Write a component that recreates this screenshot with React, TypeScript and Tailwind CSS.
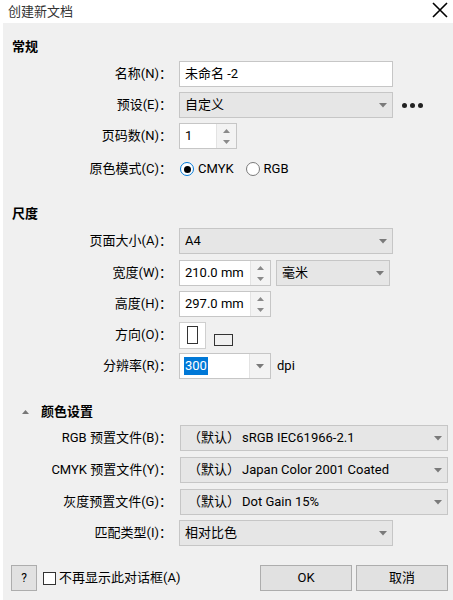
import React from "react";

const Caret = () => (
  <svg width="8" height="5" viewBox="0 0 8 5" className="shrink-0">
    <path d="M0 0H8L4 4.5Z" fill="#7a7a7a" />
  </svg>
);

const SpinArrows = () => (
  <div className="flex w-[20px] shrink-0 flex-col items-center justify-center gap-[7px] border-l border-[#e3e3e3] bg-[#f3f3f3]">
    <svg width="7" height="4" viewBox="0 0 7 4">
      <path d="M0 4H7L3.5 0Z" fill="#8a8a8a" />
    </svg>
    <svg width="7" height="4" viewBox="0 0 7 4">
      <path d="M0 0H7L3.5 4Z" fill="#8a8a8a" />
    </svg>
  </div>
);

function Select({ value, className }: { value: React.ReactNode; className: string }) {
  return (
    <div
      className={`flex h-[26px] items-center border border-[#c6c6c6] bg-[#e6e6e6] pl-[5px] pr-[5px] ${className}`}
    >
      <span className="flex-1 truncate">{value}</span>
      <Caret />
    </div>
  );
}

function Row({
  label,
  children,
  className = "",
}: {
  label: string;
  children: React.ReactNode;
  className?: string;
}) {
  return (
    <div className={`flex h-[26px] items-center ${className}`}>
      <div className="w-[169px] shrink-0 whitespace-nowrap text-right">{label}</div>
      <div className="ml-[7px] flex items-center">{children}</div>
    </div>
  );
}

function Radio({ checked, label }: { checked: boolean; label: string }) {
  return (
    <div className="flex items-center gap-[4px]">
      {checked ? (
        <span className="flex h-[14px] w-[14px] items-center justify-center rounded-full border border-[#0078d7] bg-white">
          <span className="h-[7px] w-[7px] rounded-full bg-black" />
        </span>
      ) : (
        <span className="h-[14px] w-[14px] rounded-full border border-[#7a7a7a] bg-white" />
      )}
      <span>{label}</span>
    </div>
  );
}

export default function App() {
  return (
    <div className="h-[600px] w-[453px] overflow-hidden bg-white font-['Roboto','Noto_Sans_CJK_SC',sans-serif] text-[13px] leading-[18px] text-black">
      {/* Title bar */}
      <div className="flex h-[23px] items-center justify-between pl-[8px] pr-[5px]">
        <span className="text-[13px] text-[#333]">创建新文档</span>
        <svg width="16" height="16" viewBox="0 0 16 16" className="mb-[4px]">
          <path d="M1 1L15 15M15 1L1 15" stroke="#000" strokeWidth="1.6" />
        </svg>
      </div>

      {/* Body */}
      <div className="ml-[3px] h-[577px] bg-[#f0f0f0]">
        <div className="pl-[9px] pt-[15px] font-bold">常规</div>

        <Row label="名称(N)：" className="mt-[5px]">
          <div className="flex h-[26px] w-[214px] items-center border border-[#c6c6c6] bg-white pl-[5px]">
            未命名 -2
          </div>
        </Row>

        <Row label="预设(E)：" className="mt-[5px]">
          <Select value="自定义" className="w-[214px]" />
          <div className="ml-[9px] flex gap-[3px]">
            <span className="h-[5px] w-[5px] rounded-full bg-[#222]" />
            <span className="h-[5px] w-[5px] rounded-full bg-[#222]" />
            <span className="h-[5px] w-[5px] rounded-full bg-[#222]" />
          </div>
        </Row>

        <Row label="页码数(N)：" className="mt-[5px]">
          <div className="flex h-[26px] w-[58px] border border-[#c6c6c6]">
            <div className="flex flex-1 items-center bg-white pl-[5px]">1</div>
            <SpinArrows />
          </div>
        </Row>

        <Row label="原色模式(C)：" className="mt-[7px]">
          <div className="flex items-center gap-[12px] pl-[1px]">
            <Radio checked label="CMYK" />
            <Radio checked={false} label="RGB" />
          </div>
        </Row>

        <div className="mt-[23px] pl-[9px] font-bold">尺度</div>

        <Row label="页面大小(A)：" className="mt-[5px]">
          <Select value="A4" className="w-[214px]" />
        </Row>

        <Row label="宽度(W)：" className="mt-[6px]">
          <div className="flex h-[26px] w-[92px] border border-[#c6c6c6]">
            <div className="flex flex-1 items-center bg-white pl-[5px]">210.0 mm</div>
            <SpinArrows />
          </div>
          <Select value="毫米" className="ml-[5px] w-[114px]" />
        </Row>

        <Row label="高度(H)：" className="mt-[5px]">
          <div className="flex h-[26px] w-[92px] border border-[#c6c6c6]">
            <div className="flex flex-1 items-center bg-white pl-[5px]">297.0 mm</div>
            <SpinArrows />
          </div>
        </Row>

        <Row label="方向(O)：" className="mt-[5px]">
          <div className="flex h-[27px] w-[27px] items-center justify-center border border-[#cfcfcf] bg-white">
            <span className="h-[18px] w-[11px] border border-[#333]" />
          </div>
          <span className="ml-[8px] mt-[9px] h-[12px] w-[19px] border border-[#333]" />
        </Row>

        <Row label="分辨率(R)：" className="mt-[5px]">
          <div className="flex h-[26px] w-[92px] border border-[#c6c6c6]">
            <div className="flex flex-1 items-center bg-white pl-[4px]">
              <span className="bg-[#0078d7] px-[1px] text-white">300</span>
            </div>
            <div className="flex w-[21px] items-center justify-center border-l border-[#e3e3e3] bg-[#f3f3f3]">
              <Caret />
            </div>
          </div>
          <span className="ml-[6px]">dpi</span>
        </Row>

        <div className="mt-[24px] flex items-center pl-[19px] font-bold">
          <svg width="7" height="4" viewBox="0 0 7 4">
            <path d="M0 4H7L3.5 0Z" fill="#777" />
          </svg>
          <span className="ml-[12px]">颜色设置</span>
        </div>

        <Row label="RGB 预置文件(B)：" className="mt-[4px]">
          <Select
            value={
              <>
                <span className="mr-[2px]">（默认）</span>sRGB IEC61966-2.1
              </>
            }
            className="ml-[1px] w-[268px] pl-[7px]"
          />
        </Row>

        <Row label="CMYK 预置文件(Y)：" className="mt-[6px]">
          <Select
            value={
              <>
                <span className="mr-[2px]">（默认）</span>Japan Color 2001 Coated
              </>
            }
            className="ml-[1px] w-[268px] pl-[7px]"
          />
        </Row>

        <Row label="灰度预置文件(G)：" className="mt-[6px]">
          <Select
            value={
              <>
                <span className="mr-[2px]">（默认）</span>Dot Gain 15%
              </>
            }
            className="ml-[1px] w-[268px] pl-[7px]"
          />
        </Row>

        <Row label="匹配类型(I)：" className="mt-[5px]">
          <Select value="相对比色" className="w-[214px]" />
        </Row>

        {/* Footer */}
        <div className="mt-[19px] flex h-[26px] items-center pl-[8px]">
          <div className="flex h-[26px] w-[26px] items-center justify-center border border-[#adadad] bg-[#e1e1e1] text-[12px]">
            ?
          </div>
          <span className="ml-[6px] h-[13px] w-[13px] border border-[#333] bg-white" />
          <span className="ml-[3px]">不再显示此对话框(A)</span>
          <div className="ml-auto flex gap-[4px] pr-[5px]">
            <div className="flex h-[26px] w-[92px] items-center justify-center border border-[#adadad] bg-[#e1e1e1]">
              OK
            </div>
            <div className="flex h-[26px] w-[92px] items-center justify-center border border-[#adadad] bg-[#e1e1e1]">
              取消
            </div>
          </div>
        </div>
      </div>
    </div>
  );
}
